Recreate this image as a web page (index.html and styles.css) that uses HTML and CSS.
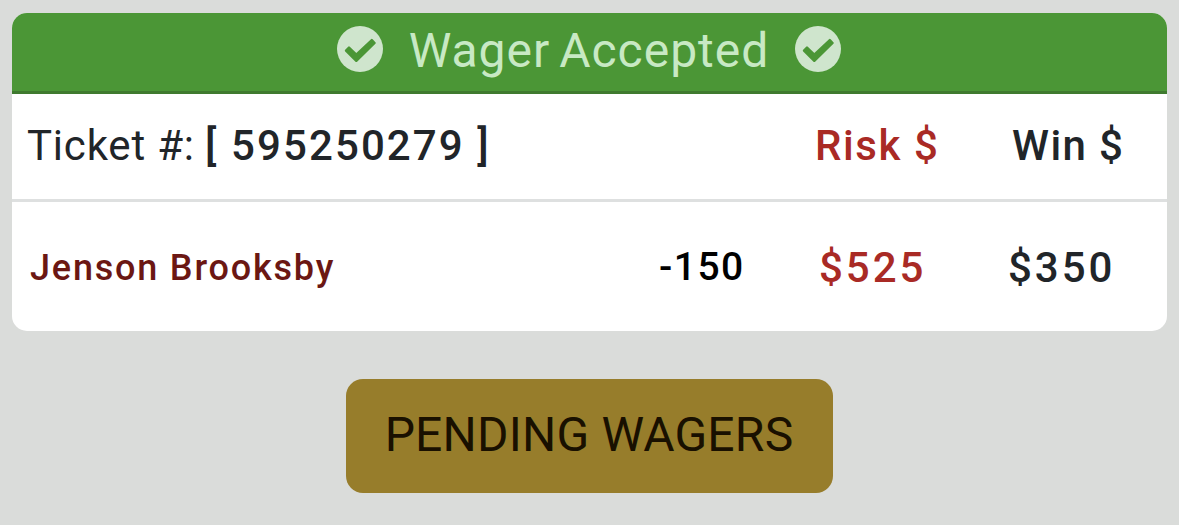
FILE: index.html
```html
<!DOCTYPE html>
<html lang="en">
  <head>
    <meta charset="utf-8">
    <title>Wager Accepted</title>
    <link rel="stylesheet" href="styles.css">
  </head>
  <body>
    <div class="card">
      <div class="card-header">
        <svg class="check" viewBox="0 0 46 46">
          <circle cx="23" cy="23" r="23" />
          <path d="M9 24.6L12 21.6L19.3 28.7L34.8 14.1L37.6 17L19.3 34.8Z" />
        </svg>
        <span class="title">Wager Accepted</span>
        <svg class="check" viewBox="0 0 46 46">
          <circle cx="23" cy="23" r="23" />
          <path d="M9 24.6L12 21.6L19.3 28.7L34.8 14.1L37.6 17L19.3 34.8Z" />
        </svg>
      </div>
      <div class="row ticket-row">
        <div class="ticket"><span class="label">Ticket #:</span><span class="number">[ 595250279 ]</span></div>
        <div class="risk">Risk $</div>
        <div class="win">Win $</div>
      </div>
      <div class="row wager-row">
        <div class="player">Jenson Brooksby</div>
        <div class="odds">-150</div>
        <div class="risk">$525</div>
        <div class="win">$350</div>
      </div>
    </div>
    <button class="pending">PENDING WAGERS</button>
  </body>
</html>
```
FILE: styles.css
```css
* {
  box-sizing: border-box;
}
body {
  margin: 0;
  height: 525px;
  padding: 13px 12px 0;
  background-color: #dadcda;
  font-family: Roboto, "Liberation Sans", sans-serif;
  color: #212529;
  overflow: hidden;
}
.card {
  height: 318px;
  border-radius: 15px;
  background-color: #fff;
  overflow: hidden;
}
.card-header {
  display: flex;
  justify-content: center;
  align-items: center;
  height: 81px;
  padding: 0 1px 3px 0;
  border-bottom: 3px solid #3f7a2f;
  background-color: #4b9636;
}
.check {
  width: 46px;
  height: 46px;
  margin-bottom: 3px;
}
.check circle {
  fill: #cfe5cd;
}
.check path {
  fill: #4b9636;
  stroke: #4b9636;
  stroke-width: 2.4;
  stroke-linejoin: round;
}
.title {
  width: 412px;
  text-align: center;
  font-size: 48px;
  letter-spacing: 1px;
  word-spacing: -4px;
  color: #c8e9c4;
}
.row {
  display: grid;
  align-items: center;
  font-size: 42px;
  font-weight: 500;
  white-space: nowrap;
}
.ticket-row {
  grid-template-columns: 803px 197px 1fr;
  height: 108px;
  padding-bottom: 2px;
  border-bottom: 3px solid #dee0e0;
}
.ticket {
  display: flex;
  padding-left: 15px;
}
.label {
  width: 178px;
  font-weight: 400;
  letter-spacing: 0.8px;
}
.number {
  letter-spacing: 2.1px;
}
.ticket-row .risk {
  letter-spacing: 1.6px;
}
.ticket-row .win {
  letter-spacing: 1.4px;
}
.wager-row {
  grid-template-columns: 647px 160px 189px 1fr;
  height: 129px;
  letter-spacing: 3px;
}
.wager-row .risk,
.wager-row .win {
  padding-top: 2px;
}
.risk {
  color: #a92a25;
}
.player {
  padding-left: 18px;
  padding-top: 2px;
  font-size: 36px;
  letter-spacing: 1.8px;
  color: #6b1713;
}
.odds {
  padding-top: 1px;
  font-size: 39px;
  letter-spacing: 1.5px;
  color: #000;
}
.pending {
  display: block;
  width: 487px;
  height: 114px;
  margin: 48px auto 0;
  padding: 0 1px 3px 0;
  border: none;
  border-radius: 17px;
  background-color: #977d2b;
  color: #191000;
  font-family: inherit;
  font-size: 48px;
  letter-spacing: 0.2px;
  cursor: pointer;
}
```
